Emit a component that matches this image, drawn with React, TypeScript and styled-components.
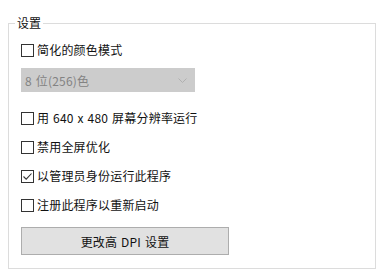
import React from "react";
import styled, { createGlobalStyle } from "styled-components";

const GlobalStyle = createGlobalStyle`
  html, body {
    margin: 0;
    padding: 0;
    background: #ffffff;
  }
  body {
    font-family: "Noto Sans CJK SC", "Noto Sans", sans-serif;
    font-size: 12px;
    color: #111111;
  }
`;

const Page = styled.div`
  width: 392px;
  height: 278px;
  padding-top: 15px;
  box-sizing: border-box;
`;

const Group = styled.fieldset`
  box-sizing: border-box;
  margin: 0 0 0 8px;
  width: 368px;
  height: 254px;
  border: 1px solid #dcdcdc;
  padding: 0 12px;
  display: flex;
  flex-direction: column;
  align-items: flex-start;
`;

const Legend = styled.legend`
  margin-left: -6px;
  padding: 0 2px;
  line-height: 16px;
  font-size: 12px;
`;

const Row = styled.label<{ $top: number }>`
  display: flex;
  align-items: center;
  height: 16px;
  margin-top: ${(p) => p.$top}px;
  line-height: 16px;
  letter-spacing: 0.2px;
  word-spacing: 1px;
  white-space: nowrap;
`;

const Box = styled.span`
  width: 13px;
  height: 13px;
  box-sizing: border-box;
  border: 1px solid #333333;
  background: #ffffff;
  margin-right: 3px;
  display: flex;
  align-items: center;
  justify-content: center;
`;

const Select = styled.div`
  margin-top: 10px;
  width: 174px;
  height: 24px;
  box-sizing: border-box;
  background: #cccccc;
  border: 1px solid #cccccc;
  display: flex;
  align-items: center;
  justify-content: space-between;
  padding: 0 7px 0 3px;
  color: #838383;
  letter-spacing: 0.2px;
  word-spacing: 1px;
`;

const Button = styled.div`
  margin-top: 14px;
  width: 208px;
  height: 28px;
  box-sizing: border-box;
  background: #e1e1e1;
  border: 1px solid #adadad;
  display: flex;
  align-items: center;
  justify-content: center;
  letter-spacing: 0.2px;
  word-spacing: 1px;
`;

const Check = ({ checked }: { checked?: boolean }) => (
  <Box>
    {checked && (
      <svg width="11" height="11" viewBox="0 0 11 11">
        <polyline
          points="1.5,5.5 4.2,8.2 9.5,2.5"
          fill="none"
          stroke="#333"
          strokeWidth="1.1"
        />
      </svg>
    )}
  </Box>
);

const Chevron = () => (
  <svg width="9" height="5" viewBox="0 0 9 5">
    <polyline
      points="0.5,0.5 4.5,4.5 8.5,0.5"
      fill="none"
      stroke="#b0b0b0"
      strokeWidth="1"
    />
  </svg>
);

export default function App() {
  return (
    <Page>
      <GlobalStyle />
      <Group>
        <Legend>设置</Legend>
        <Row $top={11}>
          <Check />
          简化的颜色模式
        </Row>
        <Select>
          <span>8 位(256)色</span>
          <Chevron />
        </Select>
        <Row $top={18}>
          <Check />用 640 x 480 屏幕分辨率运行
        </Row>
        <Row $top={13}>
          <Check />
          禁用全屏优化
        </Row>
        <Row $top={13}>
          <Check checked />
          以管理员身份运行此程序
        </Row>
        <Row $top={13}>
          <Check />
          注册此程序以重新启动
        </Row>
        <Button>更改高 DPI 设置</Button>
      </Group>
    </Page>
  );
}
